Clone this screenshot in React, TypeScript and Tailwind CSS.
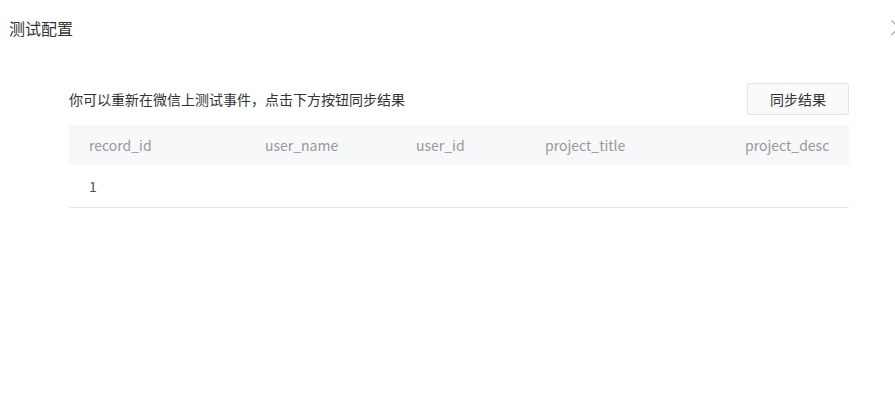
const columns = [
  { key: "record_id", width: "w-[176px] shrink-0" },
  { key: "user_name", width: "w-[151px] shrink-0" },
  { key: "user_id", width: "w-[129px] shrink-0" },
  { key: "project_title", width: "w-[200px] shrink-0" },
  { key: "project_desc", width: "flex-1 text-right" },
]

const rows = [{ record_id: "1", user_name: "", user_id: "", project_title: "", project_desc: "" }]

const App = () => {
  return (
    <div
      className="relative w-[895px] h-[405px] overflow-hidden bg-white text-[#333]"
      style={{ fontFamily: '"Microsoft YaHei", "Noto Sans CJK SC", "Noto Sans", sans-serif' }}
    >
      <div className="flex items-center h-[56px] pl-[9px]">
        <h2 className="text-[16px] leading-[20px] font-normal text-[#333]">测试配置</h2>
      </div>
      <button className="absolute left-[890px] top-[20px] text-[#aaa]">
        <svg width="16" height="16" viewBox="0 0 16 16" fill="none" stroke="currentColor" strokeWidth="1.2">
          <path d="M1.5 0.5 L15.5 15 M15.5 0.5 L1.5 15" />
        </svg>
      </button>

      <div className="ml-[69px] w-[780px] mt-[27px]">
        <div className="flex items-center justify-between h-[32px] mb-[10px]">
          <p className="text-[14px] text-[#333]">你可以重新在微信上测试事件，点击下方按钮同步结果</p>
          <button className="h-[32px] w-[102px] rounded-[3px] border border-[#e2e2e2] bg-[#fafafa] text-[14px] text-[#333]">
            同步结果
          </button>
        </div>

        <div className="text-[14px]">
          <div className="flex items-center h-[40px] bg-[#f7f8fa] px-[20px] text-[#999]">
            {columns.map((c) => (
              <div key={c.key} className={c.width}>
                {c.key}
              </div>
            ))}
          </div>
          {rows.map((r, i) => (
            <div key={i} className="flex items-center h-[43px] px-[20px] border-b border-[#e8e8e8] text-[#555]">
              {columns.map((c) => (
                <div key={c.key} className={c.width}>
                  {r[c.key as keyof typeof r]}
                </div>
              ))}
            </div>
          ))}
        </div>
      </div>
    </div>
  )
}

export default App
